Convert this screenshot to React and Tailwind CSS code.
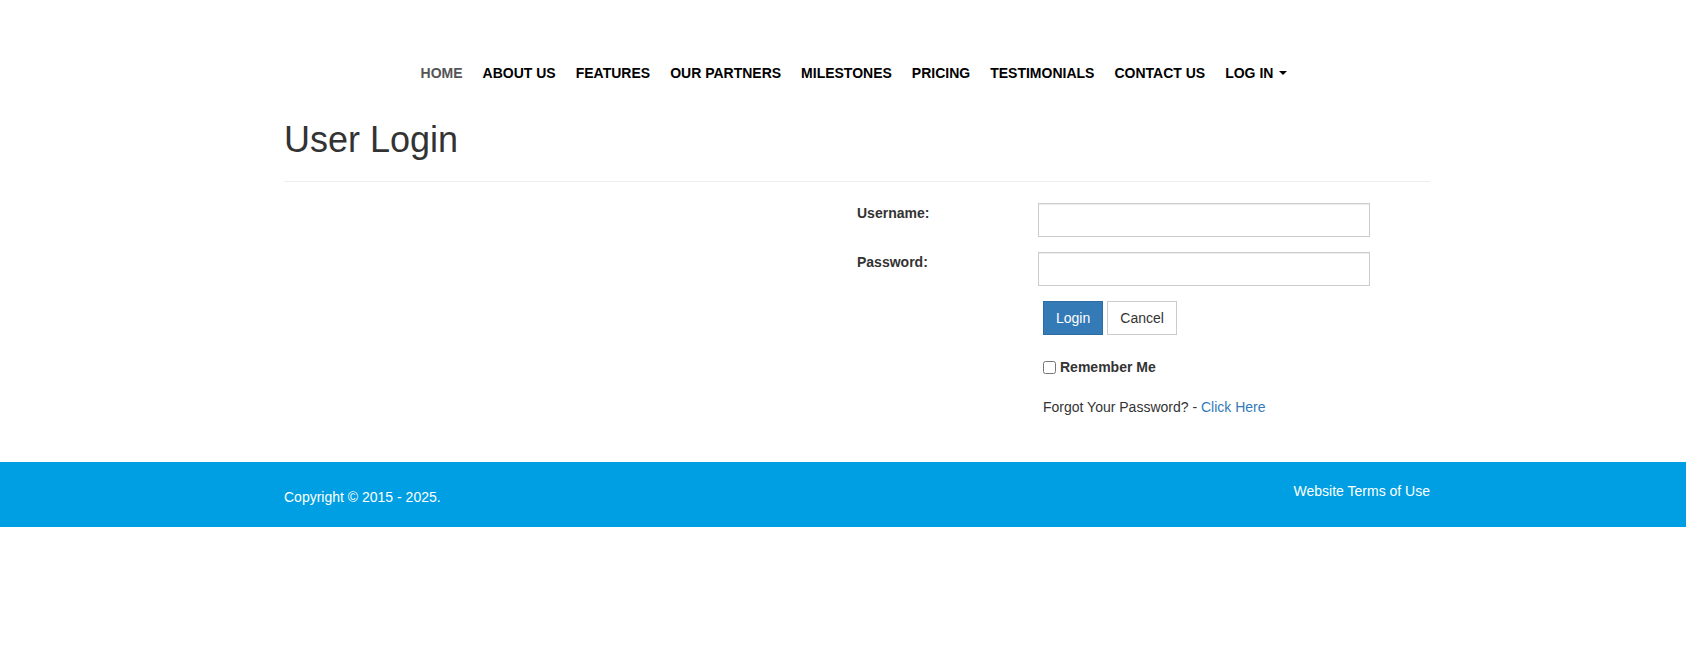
import React from 'react'

// Top navigation items
const navItems = [
  'ABOUT US',
  'FEATURES',
  'OUR PARTNERS',
  'MILESTONES',
  'PRICING',
  'TESTIMONIALS',
  'CONTACT US',
]

function TopNav() {
  return (
    <nav className="pt-[63px]">
      <ul className="flex justify-center pr-[6px] text-[14px] font-bold leading-[20px]">
        <li className="px-[10px] text-[#555]">HOME</li>
        {navItems.map((item) => (
          <li key={item} className="px-[10px] text-black">
            {item}
          </li>
        ))}
        <li className="px-[10px] text-black flex items-center">
          LOG IN
          <span className="ml-[6px] inline-block w-0 h-0 border-t-[4px] border-t-black border-x-[4px] border-x-transparent"></span>
        </li>
      </ul>
    </nav>
  )
}

/**
 * Login form, sits in the right half of the container
 */
function LoginForm() {
  return (
    <div className="grid grid-cols-2">
      <div></div>
      <div className="text-[14px] text-[#333]">
        <div className="flex">
          <label className="w-[181px] font-bold leading-[20px]">Username:</label>
          <input
            type="text"
            className="w-[332px] h-[34px] border border-[#ccc] bg-white px-3 shadow-[inset_0_1px_1px_rgba(0,0,0,0.075)] outline-none"
          />
        </div>
        <div className="flex mt-[15px]">
          <label className="w-[181px] font-bold leading-[20px]">Password:</label>
          <input
            type="password"
            className="w-[332px] h-[34px] border border-[#ccc] bg-white px-3 shadow-[inset_0_1px_1px_rgba(0,0,0,0.075)] outline-none"
          />
        </div>

        <div className="pl-[186px]">
          <div className="flex gap-[4px] mt-[15px]">
            <button className="h-[34px] px-[12px] border border-[#2e6da4] bg-[#337ab7] text-white leading-[20px]">
              Login
            </button>
            <button className="h-[34px] px-[12px] border border-[#ccc] bg-white text-[#333] leading-[20px]">
              Cancel
            </button>
          </div>

          <label className="mt-[22px] flex items-center leading-[20px] font-bold">
            <input type="checkbox" className="m-0 mr-[4px] w-[13px] h-[13px]" />
            Remember Me
          </label>

          <div className="mt-[20px] leading-[20px]">
            Forgot Your Password? - <a className="text-[#337ab7]">Click Here</a>
          </div>
        </div>
      </div>
    </div>
  )
}

export default function App() {
  return (
    <div className="min-h-[669px] bg-white font-['Liberation_Sans',Arial,sans-serif]">
      <div className="ml-[284px] w-[1146px]">
        <TopNav />

        <div className="mt-[37px] pb-[21px] border-b border-[#eee]">
          <h1 className="text-[36px] leading-[40px] text-[#333]">User Login</h1>
        </div>

        <div className="mt-[21px]">
          <LoginForm />
        </div>
      </div>

      {/* Footer */}
      <footer className="mt-[45px] h-[65px] bg-[#009fe3] text-white text-[14px] leading-[20px]">
        <div className="ml-[284px] w-[1146px] flex justify-between">
          <div className="pt-[25px]">Copyright © 2015 - 2025.</div>
          <a className="pt-[19px]">Website Terms of Use</a>
        </div>
      </footer>
    </div>
  )
}
